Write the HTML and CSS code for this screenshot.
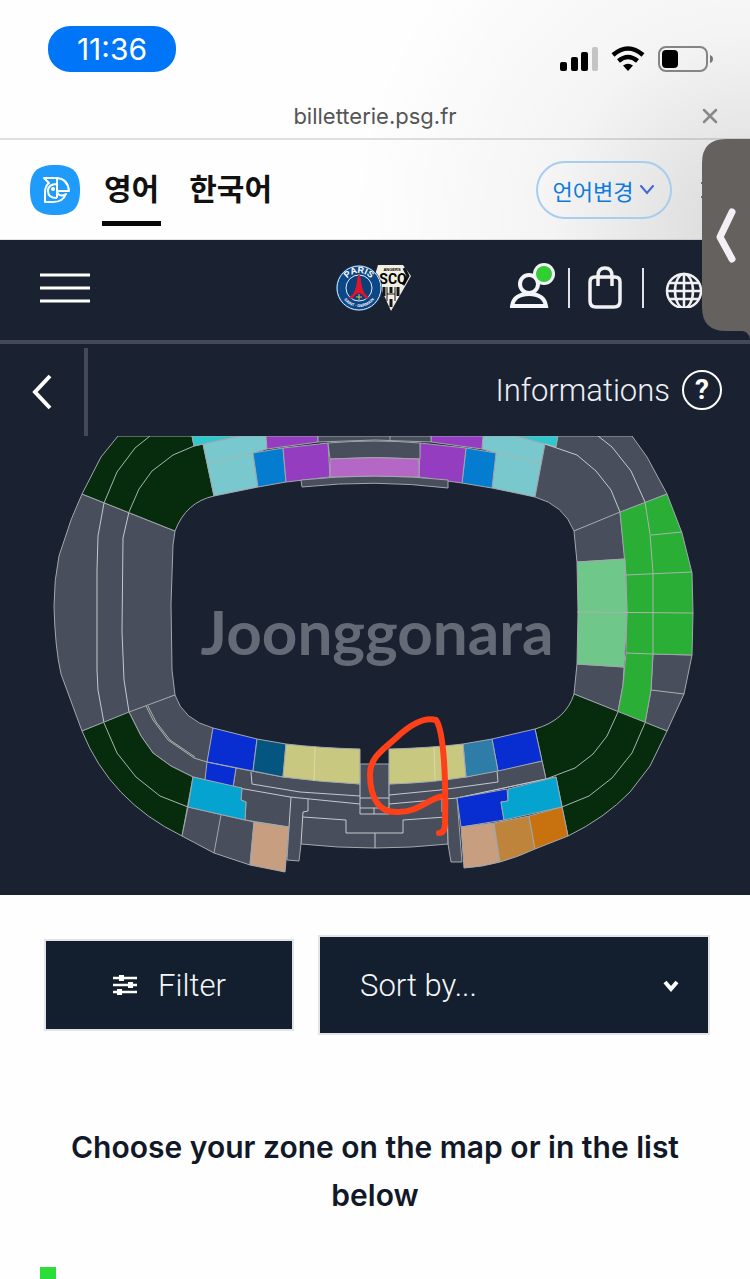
FILE: index.html
```
<!DOCTYPE html>
<html lang="en">
<head>
  <meta charset="UTF-8" />
  <meta name="viewport" content="width=device-width, initial-scale=1.0" />
  <title>billetterie.psg.fr</title>
  <link rel="stylesheet" href="styles.css">
</head>
<body>
  <div class="browser">
    <div class="status">
      <span class="time">11:36</span>
      <svg class="status-icons" width="154" height="28" viewBox="0 0 154 28" aria-hidden="true">
        <rect x="0" y="17" width="7" height="9" rx="2" />
        <rect x="11" y="12" width="7" height="14" rx="2" />
        <rect x="21" y="7" width="7" height="19" rx="2" />
        <rect x="32" y="2" width="6" height="24" rx="2" fill="#c4c4c4" />
        <g fill="none" stroke="#000" stroke-width="4.500">
          <path d="M53 10Q68 -3 83 10" />
          <path d="M58.500 16Q68 8 77.500 16" />
        </g>
        <path d="M63 20.500Q68 17 73 20.500L68 26Z" />
        <rect x="99" y="2" width="48" height="24" rx="7" fill="none" stroke="#858585" stroke-width="2" />
        <rect x="102" y="5" width="16" height="18" rx="4" />
        <path d="M150 10Q153 11 153 14Q153 17 150 18Z" fill="#777" />
      </svg>
    </div>
    <div class="address">
      <span>billetterie.psg.fr</span>
      <button class="close" aria-label="Close">
        <svg width="16" height="16" viewBox="0 0 16 16"><path d="M2 2L14 14M14 2L2 14" fill="none" stroke="#888" stroke-width="2.500" stroke-linecap="round" /></svg>
      </button>
    </div>
    <div class="translate">
      <svg class="parrot" width="50" height="50" viewBox="0 0 50 50" aria-hidden="true">
        <path d="M25 0C43 0 50 7 50 25S43 50 25 50S0 43 0 25S7 0 25 0Z" fill="#1f9cfb" />
        <g fill="none" stroke="#fff" stroke-width="2" stroke-linejoin="round">
          <path d="M14 13H27Q38 14 39 26H30Q26 26 28 29Q31 32 36 29Q33 37 23 37H15V27Q15 21 19 18Q17 16 14 13Z" />
          <path d="M27 13V33M27 19Q18 19 18 26Q18 33 27 33" />
        </g>
        <circle cx="23" cy="24" r="2" fill="#fff" />
      </svg>
      <a class="lang active" href="#">영어</a>
      <a class="lang" href="#">한국어</a>
      <button class="change">언어변경
        <svg width="16" height="10" viewBox="0 0 16 10"><path d="M2 1L8 8L14 1" fill="none" stroke="#4169d6" stroke-width="2" stroke-linecap="round" /></svg>
      </button>
      <button class="dismiss" aria-label="Dismiss">
        <svg width="20" height="20" viewBox="0 0 20 20"><path d="M2 2L18 18M18 2L2 18" fill="none" stroke="#111" stroke-width="3" /></svg>
      </button>
    </div>
    <button class="handle" aria-label="Open side panel">
      <svg width="48" height="204" viewBox="0 0 48 204">
        <path d="M48 0H24Q0 0 0 24V168Q0 192 24 192H40Q46 192 48 200Z" fill="#64615f" />
        <path d="M30 73L18 98L30 120" fill="none" stroke="#f2f0f5" stroke-width="7" stroke-linecap="round" stroke-linejoin="round" />
      </svg>
    </button>
  </div>

  <header>
    <button class="menu" aria-label="Menu">
      <svg width="50" height="30" viewBox="0 0 50 30"><path d="M0 2H50M0 15H50M0 28H50" stroke="#fff" stroke-width="3" /></svg>
    </button>
    <a class="match" href="#" aria-label="Match">
      <svg width="76" height="50" viewBox="0 0 76 50">
        <path d="M42 2H67L75 13L55 48L39 12Z" fill="#f1eee2" />
        <path d="M68 5L72 13L67 22M48 24V33M55 24V30M55 36V44M62 24V33" fill="none" stroke="#151515" stroke-width="3" />
        <path d="M51 24V38M59 24V38M51 31H59" fill="none" stroke="#151515" stroke-width="1" />
        <text x="56" y="8" class="tiny-badge">ANGERS</text>
        <text x="57" y="21" class="sco">SCO</text>
        <circle cx="23" cy="25" r="23" fill="#0c4787" />
        <circle cx="23" cy="25" r="22" fill="none" stroke="#e6edf4" stroke-width="1" />
        <circle cx="23" cy="25" r="13" fill="#0a3f79" stroke="#e6edf4" stroke-width="1" />
        <path d="M22 12H24L26 24Q28 32 33 34L30 36Q26 30 23 30T16 36L13 34Q18 32 20 24Z" fill="#e3132c" />
        <path d="M20 34H26M23 31V37" stroke="#d6bd60" stroke-width="1" />
        <path id="paris" d="M8 25A15 15 0 0 1 38 25" fill="none" />
        <text class="paris"><textPath href="#paris" startOffset="50%">PARIS</textPath></text>
        <path id="germain" d="M4 25A19 19 0 0 0 42 25" fill="none" />
        <text class="germain"><textPath href="#germain" startOffset="50%">SAINT · GERMAIN</textPath></text>
      </svg>
    </a>
    <nav>
      <a href="#" aria-label="Account">
        <svg width="48" height="50" viewBox="0 0 48 50">
          <g fill="none" stroke="#f4f5f8" stroke-width="4">
            <circle cx="19" cy="21" r="9" />
            <path d="M2 43Q4 31 19 31Q34 31 36 43Z" />
          </g>
          <circle cx="34" cy="11" r="11" fill="#f4f5f8" />
          <circle cx="34" cy="11" r="8" fill="#32cd32" />
        </svg>
      </a>
      <a class="bag" href="#" aria-label="Basket">
        <svg width="36" height="44" viewBox="0 0 36 44">
          <path d="M7 11H27Q32 11 32 16V35Q32 41 26 41H8Q2 41 2 35V16Q2 11 7 11ZM10 20V10Q10 2 17 2T24 10V20" fill="none" stroke="#f1f1f4" stroke-width="3.500" />
        </svg>
      </a>
      <a class="world" href="#" aria-label="Language">
        <svg width="40" height="40" viewBox="0 0 40 40">
          <g fill="none" stroke="#f1f1f4" stroke-width="2.500">
            <circle cx="20" cy="23" r="17" />
            <ellipse cx="20" cy="23" rx="9" ry="17" />
            <path d="M20 6V40M3 23H37M6 15H34M6 31H34" />
          </g>
        </svg>
      </a>
    </nav>
  </header>

  <div class="info-bar">
    <a class="back" href="#" aria-label="Back">
      <svg width="22" height="38" viewBox="0 0 22 38"><path d="M19 3L4 19L19 35" fill="none" stroke="#fff" stroke-width="4" /></svg>
    </a>
    <a class="info" href="#">Informations <span class="question">?</span></a>
  </div>

  <main>
    <svg class="map" viewBox="0 436 750 459" role="img" aria-label="Stadium map">
      <!-- left stand -->
      <path class="off" d="M82 494L71 520L59 556Q54 580 54 606Q55 648 61 674L82 731L175 695L172 670L171 604L173 545L175 531Z" />
      <path class="line" d="M104 503L98 536L97 570V670L98 690L104 723M129 512L123 538L122 632L124 680L129 712" />
      <!-- top left corner -->
      <path class="forest" d="M118 436H192L194 446L203 444L214 496Q186 502 175 531L82 494L101 457Z" />
      <path class="line thin" d="M150 436L135 448L117 472L104 503M194 446L173 455L152 471L139 489L129 512" />
      <!-- top stand -->
      <path class="aqua" d="M192 436H240L194 446ZM516 436H558L556 447Z" />
      <path class="teal" d="M203 444L240 436H266L267 449L253 453L258 487L214 496ZM482 449L483 436H516L545 444L535 497L492 488L496 453Z" />
      <path class="line thin" d="M208 463L253 453M496 453L541 463" />
      <path class="sky" d="M253 453L283 448L286 482L258 487ZM466 448L496 453L492 488L462 483Z" />
      <path class="purple" d="M266 436H318V442L267 449ZM283 448L328 443L330 477L286 482ZM431 436H483L482 449L431 442ZM420 443L466 448L462 483L419 477Z" />
      <path class="off" d="M318 436H431V442L375 440L318 442ZM390 436V441M328 443Q375 439 420 443V459Q375 456 330 459ZM301 480Q375 472 448 480V488Q375 479 302 487Z" />
      <path class="pink" d="M330 459Q375 456 419 459V477Q375 475 330 477Z" />
      <!-- top right corner -->
      <path class="off" d="M558 436H632L647 457L667 494L574 531Q564 505 535 497L545 444L556 447Z" />
      <path class="line" d="M598 436L612 447L631 471L645 502M545 444L577 455L596 471L611 490L620 512" />
      <!-- right stand -->
      <path class="off" d="M574 531L620 512L625 559L577 562ZM577 664L624 667L623 685L618 712L574 694ZM653 654L692 655L684 694L667 731L645 723L651 690Z" />
      <path class="green" d="M667 494L682 533L692 573L693 613L692 655L653 654L651 690L645 723L618 712L623 685L626 653L627 612L626 575L620 512Z" />
      <path class="mint" d="M577 562L625 559L627 612L624 667L577 664L578 612Z" />
      <path class="line thin" d="M645 502L650 534L653 573V654M651 535L682 532M626 575L692 572M577 612L693 613M626 653L653 654M651 690L684 694" />
      <!-- bottom right corner -->
      <path class="forest" d="M574 694L667 731L650 766L630 792Q605 818 568 836L556 777L546 779L535 729Q566 720 574 694Z" />
      <path class="line thin" d="M618 712L607 736L593 754L575 768L546 779M645 723L632 753L612 778L589 796L562 807" />
      <!-- bottom left corner -->
      <path class="off" d="M129 712L175 695Q183 720 213 728L205 780L193 777L171 766L153 753L141 736Z" />
      <path class="line thin" d="M146 706L153 720L168 740L194 758L207 762M148 706L156 722L170 740L195 757" />
      <path class="forest" d="M82 731L129 712L141 736L153 753L171 766L193 777L182 836Q110 801 82 731Z" />
      <path class="line thin" d="M104 723L117 753L136 777L160 796L188 807" />
      <!-- bottom stand -->
      <path class="off" d="M236 768L283 777L360 784V764H389V784L466 777L542 761L546 779L457 798L462 862H451L448 844Q375 852 301 844L299 861L287 860L289 827L245 820L246 802L241 800L242 788L233 787Z" />
      <path class="off" d="M188 807L254 822L250 865L214 853L182 836ZM221 815L214 853" />
      <path class="line" d="M251 772L252 784L300 792L360 796M233 787L290 797L360 804M389 795L440 790L498 782L497 771M389 804L457 798L546 779M360 784V814H389V784M360 798H389M360 808H389M374 808V814" />
      <path class="line" d="M291 797L289 827M308 799V811L303 812L301 844M303 817L346 820V833H403V820L446 817M375 833V848M442 800V812L447 813M447 799L448 844" />
      <path class="royal" d="M213 728L257 739L253 771L207 762ZM207 762L236 768L233 787L205 780ZM492 739L535 729L542 761L498 771ZM457 798L507 789L508 801L501 802L504 820L461 827Z" />
      <path class="petrol" d="M257 739L286 744L283 777L253 771Z" />
      <path class="steel" d="M463 744L492 739L498 771L466 777Z" />
      <path class="sand" d="M286 744Q320 748 360 749V784Q320 782 283 777ZM389 749Q430 748 463 744L466 777Q430 783 389 784Z" />
      <path class="line faint" d="M315 747L314 781M434 747L435 781" />
      <path class="cyan" d="M193 777L242 788L241 800L246 802L245 820L188 807ZM508 789L556 777L562 807L504 820L501 802L508 801Z" />
      <path class="tan" d="M254 822L289 827L285 872L250 865ZM461 827L494 823L500 862Q482 867 464 868Z" />
      <path class="bronze" d="M494 823L529 816L535 849Q518 857 500 862Z" />
      <path class="orange" d="M529 816L562 807L568 836L535 849Z" />
      <text class="watermark" x="377" y="655">Joonggonara</text>
      <path class="scribble" d="M444 796C428 798 420 812 398 812C380 813 370 800 370 774C370 757 384 749 396 738C412 723 425 717 436 720C444 731 446 780 445 823Q445 833 439 833" />
    </svg>

    <div class="controls">
      <button class="filter">
        <svg width="26" height="22" viewBox="0 0 26 22">
          <path d="M1 4H25M1 11H25M1 18H25" stroke="#fff" stroke-width="2.500" />
          <path d="M7 1H12V7H7ZM16 8H21V14H16ZM5 15H10V21H5Z" fill="#fff" />
        </svg>
        Filter
      </button>
      <div class="sort">
        <select aria-label="Sort by">
          <option>Sort by...</option>
        </select>
        <svg width="18" height="14" viewBox="0 0 18 14"><path d="M3 3L9 10L15 3" fill="none" stroke="#fff" stroke-width="4" /></svg>
      </div>
    </div>

    <h1>Choose your zone on the map or in the list below</h1>
    <div class="legend"></div>
  </main>
</body>
</html>
```
FILE: styles.css
```
* {
  box-sizing: border-box;
}

body {
  margin: 0;
  font-family: Inter, "Noto Sans CJK KR", sans-serif;
  background-color: #fefefe;
  color: #111827;
  overflow-x: hidden;
}

a {
  color: inherit;
  text-decoration: none;
}

button {
  padding: 0;
  border: 0;
  background: none;
  font-family: inherit;
  cursor: pointer;
}

svg {
  display: block;
}

.browser {
  position: relative;
  height: 240px;
  background: radial-gradient(circle 400px at 100% 230px, rgba(0, 0, 0, 0.15), rgba(0, 0, 0, 0.04) 50%, transparent);
}

.status {
  display: flex;
  justify-content: space-between;
  height: 92px;
  padding: 26px 36px 0 48px;
}

.time {
  width: 128px;
  height: 46px;
  border-radius: 22px;
  background-color: #0075f7;
  color: #fff;
  font-size: 30px;
  line-height: 46px;
  text-align: center;
}

.status-icons {
  margin-top: 19px;
}

.address {
  position: relative;
  height: 48px;
  border-bottom: 2px solid rgba(0, 0, 0, 0.12);
  color: #555;
  font-size: 22px;
  line-height: 48px;
  text-align: center;
}

.close {
  position: absolute;
  top: 16px;
  right: 32px;
}

.translate {
  display: flex;
  align-items: center;
  height: 100px;
  padding: 0 30px;
  border-bottom: 1px solid rgba(0, 0, 0, 0.1);
  font-family: "Noto Sans CJK KR", sans-serif;
}

.lang {
  height: 64px;
  margin: 8px 0 0 22px;
  padding: 0 2px;
  border-bottom: 5px solid transparent;
  color: #111;
  font-size: 30px;
  font-weight: 700;
  line-height: 50px;
}

.lang + .lang {
  margin-left: 26px;
}

.lang.active {
  border-color: #080808;
}

.change {
  display: flex;
  align-items: center;
  justify-content: center;
  gap: 6px;
  width: 136px;
  height: 58px;
  margin-left: auto;
  border: 2px solid #a9cdf0;
  border-radius: 29px;
  color: #0d7bdc;
  font-size: 22px;
  line-height: 50px;
}

.dismiss {
  margin-left: 28px;
}

.handle {
  position: absolute;
  z-index: 2;
  top: 139px;
  right: 0;
}

header {
  display: grid;
  grid-template-columns: 1fr auto 1fr;
  align-items: center;
  height: 104px;
  padding: 0 46px 4px 40px;
  border-bottom: 4px solid #434959;
  background-color: #1a2232;
}

.match {
  padding-left: 4px;
}

.sco {
  font-family: Roboto, sans-serif;
  font-size: 14px;
  font-weight: 700;
  text-anchor: middle;
}

.tiny-badge {
  font-family: "Liberation Sans", sans-serif;
  font-size: 4px;
  font-weight: 700;
  text-anchor: middle;
}

.paris,
.germain {
  fill: #fff;
  font-family: "Liberation Sans", sans-serif;
  font-size: 9px;
  font-weight: 700;
  text-anchor: middle;
}

.germain {
  font-size: 4px;
}

nav {
  display: flex;
  align-items: center;
  justify-content: flex-end;
}

nav a {
  flex-shrink: 0;
}

.bag {
  margin-left: 10px;
  padding: 0 18px;
  border-right: 2px solid #dfe1e6;
  border-left: 2px solid #dfe1e6;
}

.bag svg {
  margin: -2px 0;
}

.world {
  margin-left: 20px;
}

.info-bar {
  display: flex;
  align-items: center;
  justify-content: space-between;
  height: 92px;
  padding-right: 28px;
  background-color: #1a2232;
}

.back {
  display: flex;
  align-items: center;
  width: 88px;
  height: 88px;
  padding-left: 31px;
  border-right: 4px solid #434959;
  align-self: flex-end;
}

.info {
  display: flex;
  align-items: center;
  gap: 12px;
  color: #eef0f6;
  font-family: Roboto, sans-serif;
  font-size: 31px;
  font-weight: 300;
}

.question {
  width: 40px;
  height: 40px;
  border: 2px solid #fff;
  border-radius: 50%;
  color: #fff;
  font-size: 28px;
  font-weight: 700;
  line-height: 36px;
  text-align: center;
}

.map {
  width: 100%;
  background-color: #1a2232;
}

.map path {
  stroke: #a2a7ae;
  stroke-width: 1;
  stroke-linejoin: round;
}

.map .line {
  fill: none;
  stroke: #c5c8cf;
}

.map .thin {
  stroke: #a7b5ae;
}

.map .faint {
  stroke: #d9d9a5;
}

.off { fill: #484e5b; }
.forest { fill: #062c0d; }
.aqua { fill: #2ec9ce; }
.teal { fill: #79c8cd; }
.sky { fill: #047ccf; }
.purple { fill: #943dc1; }
.pink { fill: #b567c6; }
.green { fill: #2aae36; }
.mint { fill: #6fc88a; }
.royal { fill: #082ed1; }
.petrol { fill: #045681; }
.steel { fill: #2d7da8; }
.sand { fill: #c9c881; }
.cyan { fill: #05a3cf; }
.tan { fill: #c79f80; }
.bronze { fill: #bf843b; }
.orange { fill: #c8720f; }

.watermark {
  fill: #646a76;
  font-family: Lato, sans-serif;
  font-size: 62px;
  font-weight: 700;
  text-anchor: middle;
}

.map .scribble {
  fill: none;
  stroke: #ff4018;
  stroke-width: 6;
  stroke-linecap: round;
}

.controls {
  display: flex;
  align-items: center;
  gap: 28px;
  padding: 42px 42px 0 46px;
}

.filter,
.sort select {
  background-color: #131e2e;
  box-shadow: 0 0 0 2px #e2e4e8;
  color: #f5f6f8;
  font-family: Roboto, sans-serif;
  font-size: 31px;
  font-weight: 300;
}

.filter {
  display: flex;
  flex: 246;
  align-items: center;
  justify-content: center;
  gap: 20px;
  height: 88px;
}

.sort {
  position: relative;
  flex: 388;
}

.sort select {
  display: block;
  width: 100%;
  height: 96px;
  padding: 0 40px;
  border: 0;
  border-radius: 0;
  appearance: none;
}

.sort svg {
  position: absolute;
  top: 42px;
  right: 28px;
  pointer-events: none;
}

h1 {
  margin: 90px 40px 48px;
  font-size: 30px;
  font-weight: 600;
  line-height: 48px;
  text-align: center;
}

.legend {
  width: 16px;
  height: 12px;
  margin-left: 40px;
  background-color: #2bdd39;
}
```
